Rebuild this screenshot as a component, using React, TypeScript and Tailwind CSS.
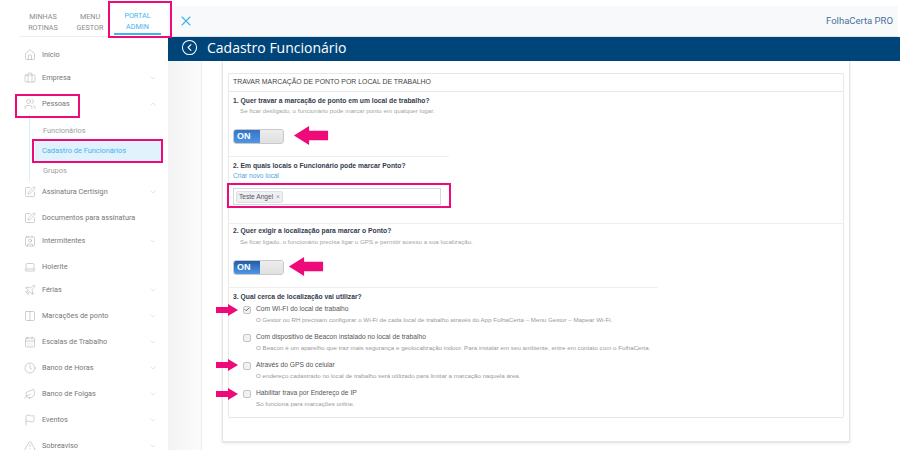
import React from "react";
import {
  Home, Briefcase, Users, SquarePen, Contact, Laptop, Plane, Columns2, CalendarDays, Clock, Leaf, Flag,
  TriangleAlert, ChevronDown, ChevronUp, X, CircleChevronLeft, Check,
} from "lucide-react";

type Item = { label: string; icon: React.ElementType; gap: string; chevron?: boolean; up?: boolean };

const before: Item[] = [
  { label: "Início", icon: Home, gap: "mt-0" },
  { label: "Empresa", icon: Briefcase, gap: "mt-[3px]", chevron: true },
  { label: "Pessoas", icon: Users, gap: "mt-[6px]", chevron: true, up: true },
];
const after: Item[] = [
  { label: "Assinatura Certisign", icon: SquarePen, gap: "mt-[1px]", chevron: true },
  { label: "Documentos para assinatura", icon: SquarePen, gap: "mt-[6px]" },
  { label: "Intermitentes", icon: Contact, gap: "mt-[3px]", chevron: true },
  { label: "Holerite", icon: Laptop, gap: "mt-[6px]" },
  { label: "Férias", icon: Plane, gap: "mt-[3px]", chevron: true },
  { label: "Marcações de ponto", icon: Columns2, gap: "mt-[6px]", chevron: true },
  { label: "Escalas de Trabalho", icon: CalendarDays, gap: "mt-[6px]", chevron: true },
  { label: "Banco de Horas", icon: Clock, gap: "mt-[6px]", chevron: true },
  { label: "Banco de Folgas", icon: Leaf, gap: "mt-[6px]", chevron: true },
  { label: "Eventos", icon: Flag, gap: "mt-[6px]", chevron: true },
  { label: "Sobreaviso", icon: TriangleAlert, gap: "mt-[6px]", chevron: true },
];

function NavItem({ item }: { item: Item }) {
  const Icon = item.icon;
  const Chev = item.up ? ChevronUp : ChevronDown;
  return (
    <div className={`flex items-center h-[20px] pl-[24px] pr-[11px] text-[7.3px] leading-[10px] text-[#777777] ${item.gap}`}>
      <Icon size={12} strokeWidth={1} className="text-[#a0a0a0] shrink-0" />
      <span className="ml-[6px] flex-1 whitespace-nowrap">{item.label}</span>
      {item.chevron && <Chev size={8} strokeWidth={1} className="text-[#b0b0b0] shrink-0" />}
    </div>
  );
}

function Toggle({ dark }: { dark?: boolean }) {
  return (
    <div className="flex w-[51px] h-[15px] rounded-[3px] border border-[#c8c8c8] overflow-hidden">
      <div className={`w-[26px] bg-gradient-to-b ${dark ? "from-[#1f5da8]" : "from-[#3574c6]"} to-[#4f97e6] text-white text-[9px] font-bold flex items-center pl-[3px]`}>ON</div>
      <div className="flex-1 bg-gradient-to-b from-[#ededed] to-[#e0e0e0]" />
    </div>
  );
}

function Arrow({ className }: { className: string }) {
  return (
    <svg viewBox="0 0 36 20" className={`absolute ${className}`}>
      <path d="M0 10 L16 0 V5 H36 V15 H16 V20 Z" fill="#ee0a78" />
    </svg>
  );
}

function SmallArrow({ className }: { className: string }) {
  return (
    <svg viewBox="0 0 22 12" className={`absolute w-[22px] h-[12px] ${className}`}>
      <path d="M22 6 L12 0 V3 H0 V9 H12 V12 Z" fill="#ee0a78" />
    </svg>
  );
}

function Option({ label, desc, checked }: { label: string; desc: string; checked?: boolean }) {
  return (
    <div className="h-[28px]">
      <div className="flex items-center h-[11px]">
        <span className="w-[8px] h-[8px] rounded-[2px] border border-[#c4c4c4] bg-[#f1f1f1] flex items-center justify-center">
          {checked && <Check size={7} strokeWidth={3} className="text-[#444]" />}
        </span>
        <span className="ml-[5px] text-[6.7px] text-[#555] whitespace-nowrap">{label}</span>
      </div>
      <div className="ml-[13px] text-[6.2px] leading-[10px] text-[#9a9a9a] whitespace-nowrap">{desc}</div>
    </div>
  );
}

export default function App() {
  return (
    <div className="relative w-[900px] h-[450px] overflow-hidden bg-white flex font-['Liberation_Sans',sans-serif]">
      {/* Sidebar */}
      <aside className="w-[168px] shrink-0 font-['Roboto',sans-serif]">
        <div className="ml-[19px] h-[37px] flex border-b border-[#eeeeee] text-[7.2px] leading-[11px] text-center text-[#8c8c8c] pt-[11px]">
          <div className="w-[48px]">MINHAS<br />ROTINAS</div>
          <div className="w-[46px]">MENU<br />GESTOR</div>
          <div className="w-[47px] ml-[1px] h-[25px] -mt-[1px] text-[#3fb4ee] border-b-2 border-[#3fb4ee]">PORTAL<br />ADMIN</div>
        </div>
        <nav className="pt-[8px]">
          {before.map((i) => <NavItem key={i.label} item={i} />)}
          <div className="ml-[29px] mr-[6px] pt-[7px] border-l border-[#d9eefb] text-[7.4px]">
            <div className="h-[20px] flex items-center pl-[13px] text-[#a0a0a0]">Funcionários</div>
            <div className="h-[20px] flex items-center pl-[7px] ml-[5px] bg-[#e2f2fc] text-[#3fb4ee] whitespace-nowrap">Cadastro de Funcionários</div>
            <div className="h-[20px] flex items-center pl-[13px] text-[#a0a0a0]">Grupos</div>
          </div>
          {after.map((i) => <NavItem key={i.label} item={i} />)}
        </nav>
      </aside>

      {/* Main */}
      <main className="flex-1 flex flex-col pt-[6px] min-w-0">
        <header className="h-[31px] shrink-0 mr-[2px] bg-[#f8f9fb] flex items-center justify-between pl-[10px] pr-[5px] border-b border-[#dfe4ea]">
          <X size={16} strokeWidth={1.7} className="text-[#3fb4ee]" />
          <span className="font-['Roboto',sans-serif] text-[9.5px] text-[#4a7199]">FolhaCerta PRO</span>
        </header>
        <div className="h-[24px] shrink-0 bg-[#00457a] flex items-center pl-[13px] pb-[3px] text-white">
          <CircleChevronLeft size={17} strokeWidth={1.5} />
          <span className="ml-[9px] font-['Open_Sans',sans-serif] font-medium text-[14px] leading-[20px]">Cadastro Funcionário</span>
        </div>
        <div className="flex-1 flex min-h-0">
          <div className="w-[34px] bg-gradient-to-r from-[#f3f3f3] to-[#fbfbfb] border-r border-[#ececec]" />
          <div className="flex-1 pl-[20px]">
            <div className="w-[628px] h-[381px] bg-white border-r border-b border-l border-[#e6e6e6] shadow-sm pt-[12px] pl-[5px] pr-[5px]">
              <div className="h-[345px] border border-[#e8e8e8] rounded-[2px]">
                <div className="h-[18px] border-b border-[#e8e8e8] pl-[4px] flex items-center text-[6.9px] text-[#444]">
                  TRAVAR MARCAÇÃO DE PONTO POR LOCAL DE TRABALHO
                </div>
                <div className="pl-[4px] pt-[4px]">
                  <div className="text-[6.75px] leading-[10px] font-bold text-[#333b4d]">1. Quer travar a marcação de ponto em um local de trabalho?</div>
                  <div className="ml-[7px] text-[6.2px] leading-[9px] text-[#a5a5a5]">Se ficar desligado, o funcionário pode marcar ponto em qualquer lugar.</div>
                  <div className="mt-[14px]"><Toggle /></div>
                </div>
                <div className="mt-[12px] w-[220px] border-t border-[#efefef]" />
                <div className="pl-[4px] pt-[4px]">
                  <div className="text-[6.75px] leading-[10px] font-bold text-[#333b4d]">2. Em quais locais o Funcionário pode marcar Ponto?</div>
                  <div className="text-[6.6px] leading-[9px] text-[#4aa8e0]">Criar novo local</div>
                  <div className="mt-[8px] w-[208px] h-[17px] border border-[#cfd8e6] flex items-center pl-[2px]">
                    <span className="h-[12px] px-[2px] bg-[#eef0f3] border border-[#dde1e6] rounded-[2px] text-[6.6px] text-[#555] flex items-center gap-[3px]">
                      Teste Angel <span className="text-[#999]">×</span>
                    </span>
                  </div>
                </div>
                <div className="mt-[18px] border-t border-[#efefef]" />
                <div className="pl-[4px] pt-[2px]">
                  <div className="text-[6.75px] leading-[10px] font-bold text-[#333b4d]">2. Quer exigir a localização para marcar o Ponto?</div>
                  <div className="ml-[7px] mt-[1px] text-[6.2px] leading-[9px] text-[#a5a5a5]">Se ficar ligado, o funcionário precisa ligar o GPS e permitir acesso a sua localização.</div>
                  <div className="mt-[14px]"><Toggle dark /></div>
                </div>
                <div className="mt-[12px] w-[429px] border-t border-[#efefef]" />
                <div className="pl-[4px] pt-[4px]">
                  <div className="text-[6.75px] leading-[10px] font-bold text-[#333b4d]">3. Qual cerca de localização vai utilizar?</div>
                  <div className="ml-[10px] mt-[2px]">
                    <Option checked label="Com WI-FI do local de trabalho" desc="O Gestor ou RH precisam configurar o Wi-Fi de cada local de trabalho através do App FolhaCerta – Menu Gestor – Mapear Wi-Fi." />
                    <Option label="Com dispositivo de Beacon instalado no local de trabalho" desc="O Beacon é um aparelho que traz mais segurança e geolocalização indoor. Para instalar em seu ambiente, entre em contato com o FolhaCerta." />
                    <Option label="Através do GPS do celular" desc="O endereço cadastrado no local de trabalho será utilizado para limitar a marcação naquela área." />
                    <Option label="Habilitar trava por Endereço de IP" desc="Só funciona para marcações online." />
                  </div>
                </div>
              </div>
            </div>
          </div>
        </div>
      </main>

      {/* Annotations */}
      <div className="absolute left-[108px] top-[1px] w-[64px] h-[37px] border-2 border-[#ee0a78]" />
      <div className="absolute left-[15px] top-[94px] w-[65px] h-[24px] border-2 border-[#ee0a78]" />
      <div className="absolute left-[32px] top-[139px] w-[131px] h-[24px] border-2 border-[#ee0a78]" />
      <div className="absolute left-[227px] top-[183px] w-[224px] h-[25px] border-2 border-[#ee0a78]" />
      <Arrow className="left-[293px] top-[126px] w-[36px] h-[19px]" />
      <Arrow className="left-[288px] top-[257px] w-[36px] h-[19px]" />
      <SmallArrow className="left-[216px] top-[304px]" />
      <SmallArrow className="left-[216px] top-[359px]" />
      <SmallArrow className="left-[216px] top-[388px]" />
    </div>
  );
}
